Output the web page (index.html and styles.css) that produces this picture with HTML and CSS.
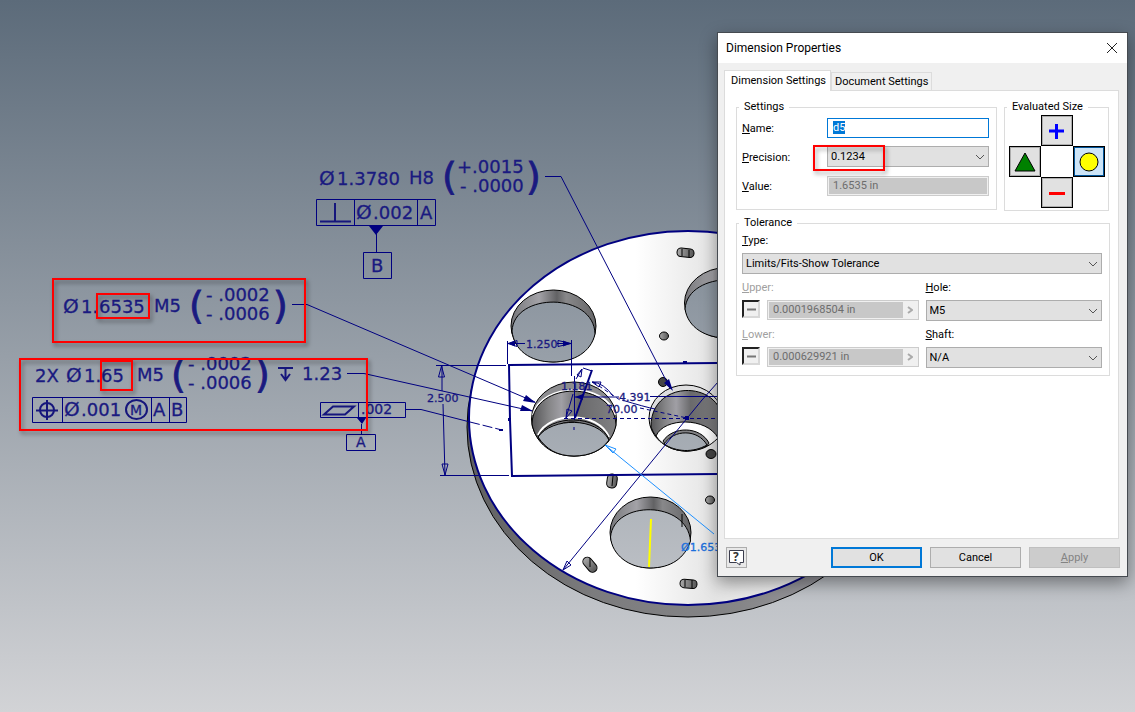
FILE: index.html
```html
<!DOCTYPE html>
<html lang="en">
<head>
<meta charset="utf-8">
<title>Dimension Properties</title>
<link rel="stylesheet" href="styles.css">
</head>
<body>
<main class="workspace">
<svg class="drawing" viewBox="0 0 1135 712" width="1135" height="712" role="img" aria-label="Flange model with dimension annotations">
  <defs>
    <linearGradient id="back" gradientUnits="userSpaceOnUse" x1="0" y1="0" x2="0" y2="712">
      <stop offset="0" stop-color="#5c6b7a"/><stop offset="1" stop-color="#d2d3d6"/>
    </linearGradient>
    <linearGradient id="face" gradientUnits="userSpaceOnUse" x1="469" y1="0" x2="907" y2="0">
      <stop offset="0" stop-color="#fff"/><stop offset=".38" stop-color="#fff"/><stop offset=".56" stop-color="#e4e4e4"/><stop offset="1" stop-color="#fff"/>
    </linearGradient>
    <linearGradient id="wall" x1="0" x2="1" y1="0" y2="0">
      <stop offset="0" stop-color="#77777b"/><stop offset=".2" stop-color="#929296"/><stop offset=".33" stop-color="#a3a2a7"/><stop offset=".54" stop-color="#626264"/><stop offset=".65" stop-color="#88888a"/><stop offset="1" stop-color="#656567"/>
    </linearGradient>
    <linearGradient id="bore" x1="0" x2="1" y1="0" y2="0">
      <stop offset="0" stop-color="#555557"/><stop offset=".2" stop-color="#858587"/><stop offset=".35" stop-color="#a09fa5"/><stop offset=".55" stop-color="#6a6a6c"/><stop offset="1" stop-color="#808082"/>
    </linearGradient>
    <linearGradient id="rim" gradientUnits="userSpaceOnUse" x1="467" y1="0" x2="830" y2="0">
      <stop offset="0" stop-color="#5f5f60"/><stop offset=".35" stop-color="#7c7c7e"/><stop offset=".75" stop-color="#858587"/><stop offset="1" stop-color="#9b9aa1"/>
    </linearGradient>
    <linearGradient id="slot" x1="0" x2="1" y1="0" y2="0">
      <stop offset="0" stop-color="#aaa"/><stop offset="1" stop-color="#555"/>
    </linearGradient>
    <filter id="soft" x="-10%" y="-10%" width="125%" height="140%">
      <feDropShadow dx="2" dy="3" stdDeviation="2" flood-color="#000" flood-opacity=".4"/>
    </filter>
  </defs>

  <!-- disc body -->
  <ellipse class="edge" cx="688" cy="427" rx="221" ry="190" fill="url(#rim)"/>
  <ellipse class="outline" cx="688" cy="418" rx="219" ry="187" fill="url(#face)"/>

  <!-- through holes: wall, then the opening seen beneath it -->
  <g class="edge">
    <ellipse cx="553.500" cy="326" rx="42.500" ry="36" fill="url(#wall)"/>
    <path fill="url(#back)" d="M512 331C514 292 594 292 595 334C591 352 574 362 553 362C530 362 514 350 512 331Z"/>
    <ellipse cx="727" cy="303" rx="42.500" ry="35.500" fill="url(#wall)"/>
    <path fill="url(#back)" d="M685 309C688 270 768 270 769 309C766 328 748 338 727 338C706 338 688 328 685 309Z"/>
    <ellipse cx="650.500" cy="532.500" rx="40.500" ry="35.500" fill="url(#wall)"/>
    <path fill="url(#back)" d="M610.500 537C614 500 687 500 690.500 541C685 558 671 568 650 568C629 568 612 555 610.500 537Z"/>
    <path fill="none" d="M682 514V527"/>
    <ellipse cx="574" cy="419" rx="42.500" ry="37" fill="#8d8d90"/>
    <path class="chamfer" d="M533 415C542 382 606 382 615 415"/>
    <path fill="url(#bore)" d="M532 424C533 380 614 380 616 425C612 444 597 456 574 456C552 456 536 444 532 424Z"/>
    <path class="chamfer" d="M538 435C549 411 598 411 609 437"/>
    <path fill="#77777a" d="M538 437C550 414 598 414 609 439L604 444C588 415 558 415 541 441Z"/>
    <path fill="url(#back)" d="M538 437C552 417 597 417 609 440C602 450 590 456 574 456C557 456 546 449 538 437Z"/>
    <ellipse cx="686" cy="418" rx="37" ry="33" fill="#dededf"/>
    <path fill="url(#bore)" d="M651 427C650 379 722 379 723 423C716 441 705 451 686 451C670 451 656 441 651 427Z"/>
    <path fill="#fff" d="M656 436C664 417 707 417 718 438C709 447 700 451 686 451C673 451 662 445 656 436Z"/>
    <path fill="#818184" d="M663 441C673 426 700 426 709 443L707 446C695 451 678 452 665 444Z"/>
    <path fill="url(#back)" d="M664 444C674 429 698 429 707 445C693 453 676 452 664 444Z"/>
  </g>

  <!-- screw slots and pin holes -->
  <g class="edge" fill="url(#slot)">
    <rect x="677" y="248.500" width="17" height="8.500" rx="4" transform="rotate(6 685 253)"/>
    <path d="M682 249V256M689 250V257"/>
    <rect x="607" y="474" width="10" height="14" rx="4.500" transform="rotate(8 612 481)"/>
    <path d="M613 476L612 486"/>
    <rect x="582" y="560" width="17" height="9" rx="4.500" transform="rotate(50 590 564)"/>
    <path d="M590 558V567"/>
    <rect x="680" y="579.500" width="17" height="8.500" rx="4" transform="rotate(5 688 584)"/>
    <path d="M685 580V587M692 580V588"/>
    <ellipse cx="664" cy="336" rx="4.500" ry="4"/>
    <ellipse cx="710" cy="500" rx="4.500" ry="4"/>
    <ellipse cx="663" cy="382" rx="4.500" ry="4.500" fill="#444"/>
    <ellipse cx="711" cy="454" rx="5" ry="4.500" fill="#444"/>
  </g>

  <!-- sketch geometry -->
  <g class="sketch">
    <path d="M718 363L509 365L510 420L512 476L718 474"/>
    <path d="M592 370L575 418"/>
  </g>
  <path class="highlight" d="M651 519L649 567"/>
  <g class="line">
    <path d="M507.500 341V364M571.500 340V376M507 343.500H525M557 343.500H571M436 365.500H506M440 475.500H509M442 366L442 391M443 404L445 475"/>
    <path d="M441.500 366l-3 11h6zM445 475l-3-11h6zM508 343.500l9-3v6zM571 343.500l-13-3v6z"/>
    <path d="M702 400L718 382M702 400L563 570M563 570l4-9 4 4z"/>
    <path d="M574.500 376V420M574 427V430M574 397H619M650 396.500H718M566 418L573 394M566 418l1-9 5 2zM583 368L592 371M582 369L576 379M582 369l-1 8-4-2z"/>
    <path d="M592 382Q604 383 613 396M592 382l9 0-2 5zM622 400Q645 407 655 409"/>
    <path stroke-dasharray="4 3" d="M564 418.500H718M593 382L620 400M640 408L687 418"/>
    <path d="M545 176.500H561L670 388M292 304.500H307L535 402M347 373.500H364L532 411M405 409.500H421L470 422"/>
    <path stroke-dasharray="10 3" d="M470 422L502 430"/>
  </g>
  <g class="solid">
    <path d="M673 391l-9-8 5-4zM536 403l-13-2 3-6zM533 411l-13 0 2-6zM575 397l8-3v6zM508 343.500l7-3v6zM571 343.500l-8-3v6zM369 226h14l-7 9zM357 418h9l-4 6z"/>
    <path d="M685 416h4v4h-4zM683 361h4v3h-4zM508 418h3v3h-3zM499 429h4v2h-4z"/>
  </g>
  <path class="picked" d="M605 445L714 534M605 445l11 4-3 4z"/>
  <g class="dim">
    <text x="526" y="348">1.250</text><text x="427" y="402">2.500</text><text x="561" y="390">1.181</text>
    <text x="619" y="401">4.391</text><text x="606" y="413">70.00</text>
    <text class="dim-picked" x="681" y="551">Ø1.6535</text>
  </g>

  <!-- bore callout -->
  <g class="note">
    <text class="dia" x="319" y="185">Ø</text><text x="337" y="185">1.3780</text><text x="409" y="184">H8</text>
    <text class="paren" x="442" y="189">(</text><text x="457" y="173">+.0015</text><text x="460" y="192">- .0000</text><text class="paren" x="526" y="189">)</text>
    <text class="dia" x="356" y="219">Ø</text><text x="373" y="219">.002</text><text x="420" y="219">A</text><text x="371" y="272">B</text>
  </g>
  <g class="line">
    <path d="M316.500 199.500H435.500V225.500H316.500ZM354.500 199.500V225.500M417.500 199.500V225.500M376.500 234V252M363.500 252.500H391.500V278.500H363.500Z"/>
    <path class="symbol" d="M320 221.500H351M335 203V221"/>
  </g>

  <!-- full precision callout -->
  <g class="note">
    <text class="dia" x="63" y="313">Ø</text><text x="81" y="313">1.</text><text x="99" y="313">6535</text><text x="154" y="312">M5</text>
    <text class="paren" x="189" y="318">(</text><text x="206" y="301">- .0002</text><text x="206" y="320">- .0006</text><text class="paren" x="273" y="318">)</text>
  </g>

  <!-- counterbore callout -->
  <g class="note">
    <text x="35" y="382">2X</text><text class="dia" x="66" y="382">Ø</text><text x="84" y="382">1.</text><text x="101" y="382">65</text><text x="137" y="381">M5</text>
    <text class="paren" x="171" y="387">(</text><text x="188" y="370">- .0002</text><text x="188" y="389">- .0006</text><text class="paren" x="255" y="387">)</text>
    <text x="302" y="380">1.23</text>
    <text class="dia" x="64" y="416">Ø</text><text x="81" y="416">.001</text><text class="mod" x="130" y="415">M</text><text x="153" y="416">A</text><text x="171" y="416">B</text>
    <text class="flat" x="361" y="414">.002</text><text class="flat" x="356" y="447">A</text>
  </g>
  <g class="line">
    <path d="M32.500 397.500H186.500V422.500H32.500ZM62.500 397.500V422.500M151.500 397.500V422.500M169.500 397.500V422.500"/>
    <path d="M320.500 402.500H405.500V417.500H320.500ZM358.500 402.500V417.500M361.500 424V434M346.500 434.500H375.500V450.500H346.500Z"/>
    <g class="symbol">
      <path d="M36 410.500H58M47 400V420M278 368H293M285.500 368V379M281 374L285.500 380L290 374M324 414.500L333 406.500H354L345 414.500Z"/>
      <circle cx="47" cy="410" r="7"/><ellipse cx="136.500" cy="409.500" rx="10.500" ry="9.500"/>
    </g>
  </g>

  <g class="marks" filter="url(#soft)">
    <rect x="53" y="279" width="252" height="63"/><rect x="97" y="294" width="52" height="24"/>
    <rect x="20" y="359" width="347" height="71"/><rect x="101" y="361" width="31" height="29"/>
  </g>
</svg>

<form class="dialog" role="dialog" aria-labelledby="title">
  <header class="titlebar">
    <h1 id="title" class="title">Dimension Properties</h1>
    <button class="close" type="button" aria-label="Close"><svg width="12" height="12" viewBox="0 0 12 12"><path d="M1 1L11 11M11 1L1 11"/></svg></button>
  </header>
  <div class="tabs" role="tablist">
    <button class="tab tab-active" type="button" role="tab" aria-selected="true">Dimension Settings</button>
    <button class="tab" type="button" role="tab" aria-selected="false">Document Settings</button>
  </div>
  <section class="panel" role="tabpanel">
    <div class="top">
      <fieldset class="group settings">
        <legend>Settings</legend>
        <div class="rows">
          <label for="name"><u>N</u>ame:</label>
          <input id="name" class="field name" value="d5" autofocus>
          <label for="precision"><u>P</u>recision:</label>
          <div class="combo precision">
            <select id="precision"><option>0.1234</option></select>
            <svg class="chevron" width="10" height="6" viewBox="0 0 10 6"><path d="M1 1L5 5L9 1"/></svg>
            <span class="mark"></span>
          </div>
          <label for="value"><u>V</u>alue:</label>
          <input id="value" class="field" value="1.6535 in" disabled>
        </div>
      </fieldset>
      <fieldset class="group evaluated">
        <legend>Evaluated Size</legend>
        <div class="pad">
          <button class="size size-up" type="button" aria-label="Upper"><svg width="16" height="16" viewBox="0 0 16 16"><path stroke="#00f" stroke-width="3" d="M0 8H15M7.500 1V16"/></svg></button>
          <button class="size size-left" type="button" aria-label="Median"><svg width="22" height="20" viewBox="0 0 22 20"><path fill="#008000" stroke="#000" d="M1 19L11 1L21 19Z"/></svg></button>
          <button class="size size-right" type="button" aria-label="Nominal" aria-pressed="true"><svg width="20" height="20" viewBox="0 0 20 20"><circle cx="10" cy="10" r="9" fill="#ff0" stroke="#000"/></svg></button>
          <button class="size size-down" type="button" aria-label="Lower"><svg width="16" height="16" viewBox="0 0 16 16"><path stroke="#f00" stroke-width="3" d="M0 8.500H16"/></svg></button>
        </div>
      </fieldset>
    </div>
    <fieldset class="group tolerance">
      <legend>Tolerance</legend>
      <div class="cells">
        <div class="cell wide"><label for="type"><u>T</u>ype:</label>
          <div class="combo"><select id="type"><option>Limits/Fits-Show Tolerance</option></select><svg class="chevron" width="10" height="6" viewBox="0 0 10 6"><path d="M1 1L5 5L9 1"/></svg></div></div>
        <div class="cell"><label class="dim-label" for="upper"><u>U</u>pper:</label>
          <div class="limit"><button class="sign" type="button" disabled aria-label="Upper sign"><svg width="9" height="3" viewBox="0 0 9 3"><path d="M0 1.500H9"/></svg></button>
          <div class="entry"><input id="upper" value="0.0001968504 in" disabled><button type="button" disabled aria-label="More"><svg width="6" height="8" viewBox="0 0 6 8"><path d="M1 1L5 4L1 7"/></svg></button></div></div></div>
        <div class="cell"><label for="hole"><u>H</u>ole:</label>
          <div class="combo"><select id="hole"><option>M5</option></select><svg class="chevron" width="10" height="6" viewBox="0 0 10 6"><path d="M1 1L5 5L9 1"/></svg></div></div>
        <div class="cell"><label class="dim-label" for="lower"><u>L</u>ower:</label>
          <div class="limit"><button class="sign" type="button" disabled aria-label="Lower sign"><svg width="9" height="3" viewBox="0 0 9 3"><path d="M0 1.500H9"/></svg></button>
          <div class="entry"><input id="lower" value="0.000629921 in" disabled><button type="button" disabled aria-label="More"><svg width="6" height="8" viewBox="0 0 6 8"><path d="M1 1L5 4L1 7"/></svg></button></div></div></div>
        <div class="cell"><label for="shaft"><u>S</u>haft:</label>
          <div class="combo"><select id="shaft"><option>N/A</option></select><svg class="chevron" width="10" height="6" viewBox="0 0 10 6"><path d="M1 1L5 5L9 1"/></svg></div></div>
      </div>
    </fieldset>
  </section>
  <footer class="actions">
    <button class="help" type="button" aria-label="Help"><svg width="17" height="17" viewBox="0 0 17 17"><path fill="#fff" stroke="#3a3c4c" d="M1.500 1.500H15.500V13.500H12V16L8.500 13.500H1.500Z"/><text x="5" y="12">?</text></svg></button>
    <button class="action action-default" type="submit">OK</button>
    <button class="action" type="button">Cancel</button>
    <button class="action" type="button" disabled><u>A</u>pply</button>
  </footer>
</form>
</main>
<script src="dialog.js"></script>
</body>
</html>
```
FILE: styles.css
```css
* { box-sizing: border-box; }
body { margin: 0; font: 11px/14px Roboto, "Noto Sans", sans-serif; color: #000; }
button, input, select { font: inherit; color: inherit; margin: 0; padding: 0; border-radius: 0; }

.workspace { position: relative; min-height: 100vh; overflow: hidden; background: linear-gradient(#5c6b7a, #d2d3d6); }
.drawing { display: block; }

.edge { stroke: #000; stroke-width: 1; }
.outline { stroke: #000080; stroke-width: 2; }
.chamfer { fill: none; stroke: #fff; stroke-width: 2; }
.sketch { fill: none; stroke: #000080; stroke-width: 2; }
.line { fill: none; stroke: #000080; stroke-width: 1; }
.symbol { stroke: #16167c; stroke-width: 2; }
.solid { fill: #000080; }
.highlight { stroke: #ff0; stroke-width: 2; }
.picked { fill: none; stroke: #1e90ff; }
.note { font: 18px "DejaVu Sans", sans-serif; fill: #1a1a80; stroke: #1a1a80; stroke-width: .3; }
.dia { font-size: 20px; }
.paren { font-size: 38px; stroke-width: .8; }
.mod { font-size: 14px; }
.flat { font-size: 14px; }
.dim { font: 11px "DejaVu Sans", sans-serif; fill: #1a1a80; stroke: #1a1a80; stroke-width: .3; }
.dim-picked { fill: #1b6fdc; stroke: #1b6fdc; }
.marks { fill: none; stroke: #f00; stroke-width: 2; }

.dialog { position: absolute; left: 717px; top: 32px; width: 411px; border: 1px solid #454a50; background: #f0f0f0; box-shadow: 0 6px 16px rgba(0, 0, 0, .4); }
.titlebar { display: flex; align-items: center; justify-content: space-between; height: 30px; padding: 0 9px 0 8px; background: #fff; }
.title { margin: 0; font: 12px/16px Roboto, "Noto Sans", sans-serif; }
.close { display: flex; border: 0; background: none; }
.close svg, .chevron { fill: none; stroke: #222; }
.chevron { stroke: #555; }

.tabs { display: flex; align-items: flex-end; padding: 7px 6px 0; }
.tab { height: 18px; padding: 0 3px; border: 1px solid #dcdcdc; border-bottom: 0; background: #f0f0f0; white-space: nowrap; }
.tab-active { position: relative; height: 21px; margin-bottom: -1px; padding: 0 4px 0 6px; background: #fff; }
.panel { min-height: 449px; margin: 0 8px 0 6px; padding: 9px 8px 0 11px; border: 1px solid #dcdcdc; background: #fff; }
.top { display: grid; grid-template-columns: 1fr 105px; gap: 7px; align-items: start; margin-right: 1px; }
.group { min-width: 0; margin: 0; border: 1px solid #dcdcdc; }
.group legend { margin-left: -3px; padding: 0 5px; }
.settings { padding: 3px 7px 13px 5px; }
.rows { display: grid; grid-template-columns: 85px 1fr; grid-auto-rows: 21px; row-gap: 8px; align-items: center; }
.rows label { padding-top: 2px; }
.field { width: 100%; height: 20px; padding: 0 5px; border: 1px solid #0078d7; background: #fff; outline: 0; }
.field::selection { background: #0078d7; color: #fff; }
.field:disabled, .entry { border: 1px solid #ccc; background: #c8c8c8; color: #6d6d6d; box-shadow: inset 0 0 0 1px #f0f0f0; }
.combo { display: grid; align-items: center; position: relative; }
.combo > * { grid-area: 1 / 1; }
.combo select { width: 100%; height: 21px; padding: 0 3px; border: 1px solid #adadad; background: #e1e1e1; appearance: none; }
.chevron { justify-self: end; margin-right: 4px; pointer-events: none; }
.mark { position: absolute; left: -14px; top: -1px; width: 72px; height: 26px; border: 2px solid #f00; filter: drop-shadow(2px 3px 2px rgba(0, 0, 0, .35)); pointer-events: none; }

.evaluated { padding: 1px 3px 2px; }
.evaluated legend { margin-left: -1px; }
.pad { display: grid; grid-template-columns: repeat(3, 32px); grid-auto-rows: 31px; justify-content: center; }
.size { display: flex; align-items: center; justify-content: center; border: 1px solid #000; background: #e1e1e1; box-shadow: inset 0 0 0 1px #adadad; }
.size-up { grid-area: 1 / 2; }
.size-left { grid-area: 2 / 1; }
.size-right { grid-area: 2 / 3; background: #cce4f7; box-shadow: inset 0 0 0 1px #005499; }
.size-down { grid-area: 3 / 2; }

.tolerance { margin-top: 5px; padding: 4px 7px 7px 5px; }
.cells { display: grid; grid-template-columns: 1fr 1fr; gap: 7px; }
.cell { display: grid; gap: 5px; align-content: start; }
.wide { grid-column: 1 / -1; }
.dim-label { color: #a0a0a0; }
.limit { display: grid; grid-template-columns: 18px 1fr; gap: 7px; align-items: start; }
.sign { display: flex; align-items: center; justify-content: center; height: 18px; border: 2px solid #d8d8d8; border-top-color: #222; border-left-color: #222; background: #f0f0f0; }
.sign svg { stroke: #777; stroke-width: 2; }
.entry { display: grid; grid-template-columns: 1fr 14px; height: 20px; padding: 1px; }
.entry input { min-width: 0; width: 100%; padding: 0 4px; border: 0; background: none; color: #6d6d6d; }
.entry button { display: flex; align-items: center; justify-content: center; border: 0; background: #f0f0f0; }
.entry svg { fill: none; stroke: #aaa; stroke-width: 2; }

.actions { display: flex; gap: 8px; align-items: center; padding: 8px 7px 8px 8px; }
.help { display: flex; align-items: center; justify-content: center; width: 21px; height: 21px; margin-right: auto; border: 1px solid #adadad; background: #e8e8e8; }
.help text { font: bold 12px "Noto Sans", sans-serif; fill: #333; }
.action { width: 91px; height: 21px; border: 1px solid #adadad; background: #e1e1e1; }
.action-default { border: 2px solid #0078d7; }
.action:disabled { border-color: #bfbfbf; background: #ccc; color: #838383; }
```
FILE: dialog.js
```js
const nameField = document.getElementById("name");
nameField.focus();
nameField.select();
```
